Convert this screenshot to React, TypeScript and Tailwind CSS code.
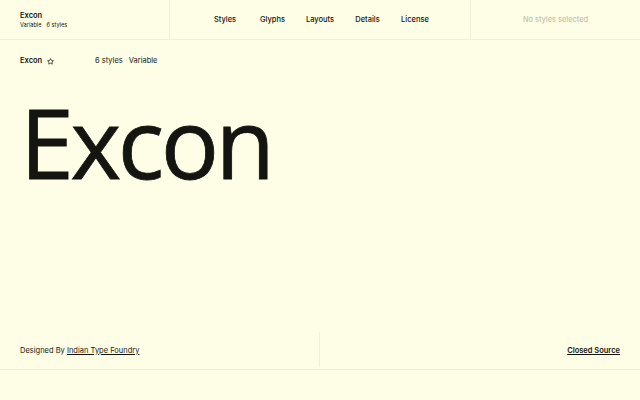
import React from "react";

export default function App() {
  return (
    <div className="w-[640px] h-[400px] bg-[#fefee6] text-[#151510] flex flex-col overflow-hidden" style={{ fontFamily: "Inter, 'Liberation Sans', sans-serif" }}>
      <header className="h-[40px] flex border-b border-[#f0f0d6] shrink-0">
        <div className="w-[170px] border-r border-[#f0f0d6] px-5 flex flex-col justify-center">
          <div className="text-[7.5px] font-semibold leading-[10px]">Excon</div>
          <div className="text-[5.6px] leading-[8px] flex gap-[5px]"><span>Variable</span><span>6 styles</span></div>
        </div>
        <nav className="w-[300px] flex items-center justify-center text-[7.5px] font-medium">
          <span className="w-[47.5px] text-center">Styles</span>
          <span className="w-[47.5px] text-center">Glyphs</span>
          <span className="w-[47.5px] text-center">Layouts</span>
          <span className="w-[47.5px] text-center">Details</span>
          <span className="w-[47.5px] text-center">License</span>
        </nav>
        <div className="flex-1 border-l border-[#f0f0d6] flex items-center justify-center text-[7.4px] text-[#c4c4ac] font-medium">No styles selected</div>
      </header>
      <div className="h-[40px] flex items-center px-5 pt-[2px] text-[7.5px] shrink-0">
        <div className="w-[75px] flex items-center gap-[5px]">
          <span className="font-semibold">Excon</span>
          <svg width="7" height="7" viewBox="0 0 24 24" fill="none" stroke="#151510" strokeWidth="2.4" strokeLinejoin="round"><polygon points="12 2 15.1 8.3 22 9.3 17 14.1 18.2 21 12 17.8 5.8 21 7 14.1 2 9.3 8.9 8.3 12 2" /></svg>
        </div>
        <div className="flex gap-[6px]"><span>6 styles</span><span>Variable</span></div>
      </div>
      <div className="flex-1 px-5 pt-[1px]">
        <div className="text-[97px] leading-[120px] tracking-[-3.5px] text-[#141410]" style={{ fontFamily: "'Open Sans', 'Noto Sans', sans-serif", WebkitTextStroke: "0.8px #141410" }}>Excon</div>
      </div>
      <footer className="h-[40px] flex border-b border-[#f0f0d6] shrink-0 mb-[30px]">
        <div className="w-[320px] border-r border-[#f0f0d6] my-[2px] px-5 pt-[2px] flex items-center text-[7.5px]">
          <span>Designed By&nbsp;</span><span className="underline">Indian Type Foundry</span>
        </div>
        <div className="flex-1 px-5 pt-[2px] flex items-center justify-end text-[7.5px] font-semibold">
          <span className="underline">Closed Source</span>
        </div>
      </footer>
    </div>
  );
}
